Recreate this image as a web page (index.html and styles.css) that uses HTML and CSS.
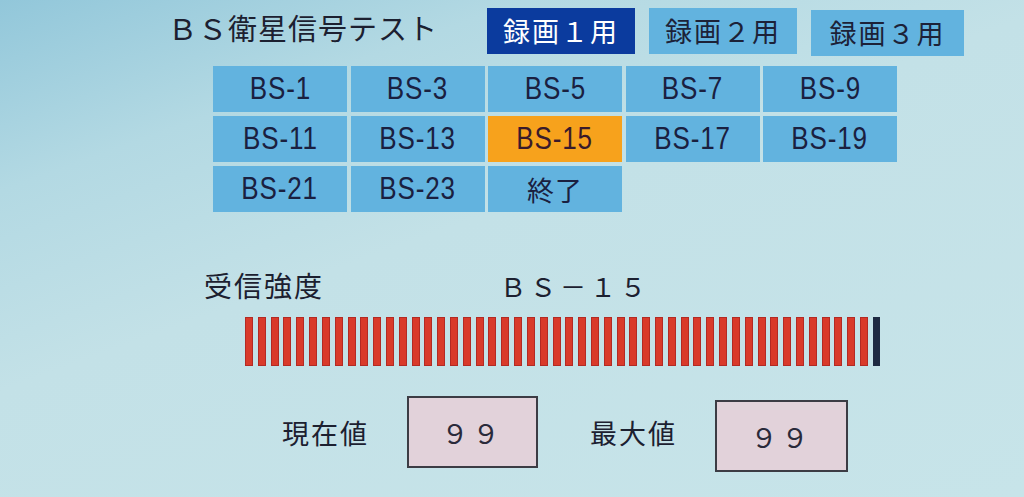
FILE: index.html
```html
<!DOCTYPE html>
<html lang="ja">
<head>
<meta charset="utf-8">
<title>ＢＳ衛星信号テスト</title>
<link rel="stylesheet" href="styles.css">
</head>
<body>
<div class="page">
  <div class="header">
    <div class="title">ＢＳ衛星信号テスト</div>
    <div class="tabs">
      <div class="tab tab-active">録画１用</div>
      <div class="tab">録画２用</div>
      <div class="tab tab-wide">録画３用</div>
    </div>
  </div>

  <div class="grid">
    <div class="cell"><span class="cell-text">BS-1</span></div>
    <div class="cell"><span class="cell-text">BS-3</span></div>
    <div class="cell"><span class="cell-text">BS-5</span></div>
    <div class="cell"><span class="cell-text">BS-7</span></div>
    <div class="cell"><span class="cell-text">BS-9</span></div>
    <div class="cell"><span class="cell-text">BS-11</span></div>
    <div class="cell"><span class="cell-text">BS-13</span></div>
    <div class="cell cell-selected"><span class="cell-text">BS-15</span></div>
    <div class="cell"><span class="cell-text">BS-17</span></div>
    <div class="cell"><span class="cell-text">BS-19</span></div>
    <div class="cell"><span class="cell-text">BS-21</span></div>
    <div class="cell"><span class="cell-text">BS-23</span></div>
    <div class="cell cell-jp">終了</div>
  </div>

  <div class="signal-head">
    <div class="signal-label">受信強度</div>
    <div class="signal-channel">ＢＳ－１５</div>
  </div>

  <div class="bar" id="bar"></div>

  <div class="values">
    <div class="value-label">現在値</div>
    <div class="value-box">９９</div>
    <div class="value-label value-label-2">最大値</div>
    <div class="value-box value-box-2">９９</div>
  </div>
</div>
<script>
  (function () {
    var bar = document.getElementById('bar');
    for (var i = 0; i < 50; i++) {
      var s = document.createElement('div');
      s.className = i === 49 ? 'stripe stripe-end' : 'stripe';
      bar.appendChild(s);
    }
  })();
</script>
</body>
</html>
```

FILE: styles.css
```css
html, body {
  margin: 0;
  padding: 0;
}

body {
  width: 1024px;
  height: 497px;
  overflow: hidden;
  background: linear-gradient(160deg, #92c7da 0%, #b3d9e3 22%, #c3e1e7 45%, #c7e4e9 100%);
  font-family: "Noto Sans CJK JP", "Noto Sans", sans-serif;
  color: #1c2238;
}

.page {
  padding-top: 8px;
}

.header {
  display: flex;
  align-items: center;
  margin-left: 168px;
  height: 47px;
}

.title {
  width: 319px;
  font-size: 29px;
  letter-spacing: 1px;
  line-height: 1;
  color: #1c2030;
  margin-top: -8px;
}

.tabs {
  display: flex;
  gap: 14px;
}

.tab {
  width: 148px;
  height: 46px;
  background: #62b3df;
  display: flex;
  align-items: center;
  justify-content: center;
  font-size: 27px;
  letter-spacing: 2px;
  color: #1c2238;
}

.tab-wide {
  width: 153px;
  margin-top: 2px;
}

.tab-active {
  background: #0b3b9e;
  color: #ffffff;
}

.grid {
  display: grid;
  grid-template-columns: repeat(5, 134px);
  grid-auto-rows: 46px;
  column-gap: 3.5px;
  row-gap: 4px;
  margin-left: 213px;
  margin-top: 11px;
}

.cell {
  background: #62b3df;
  display: flex;
  align-items: center;
  justify-content: center;
  font-family: "Liberation Sans", "DejaVu Sans", sans-serif;
  font-size: 31px;
  color: #1a2040;
}

.cell-text {
  display: inline-block;
  letter-spacing: 1px;
  transform: scaleX(0.84);
}

.cell-jp {
  font-family: "Noto Sans CJK JP", sans-serif;
  font-size: 27px;
  letter-spacing: 1px;
}

.cell-selected {
  background: #f7a21c;
  color: #3a1a2a;
}

.signal-head {
  display: flex;
  align-items: center;
  margin-top: 58px;
  height: 30px;
}

.signal-label {
  margin-left: 204px;
  width: 296px;
  font-size: 28px;
  letter-spacing: 2px;
  color: #1c2030;
}

.signal-channel {
  font-size: 26px;
  letter-spacing: 4px;
  color: #1c2030;
}

.bar {
  display: flex;
  justify-content: space-between;
  width: 635px;
  height: 49px;
  margin-left: 245px;
  margin-top: 17px;
}

.stripe {
  width: 8px;
  height: 100%;
  background: #d93a2a;
  box-shadow: inset 0 0 0 1px #b32a24;
}

.stripe-end {
  width: 7px;
  background: #1e2a42;
  box-shadow: none;
}

.values {
  display: flex;
  align-items: center;
  margin-top: 26px;
}

.value-label {
  margin-left: 282px;
  width: 125px;
  font-size: 27px;
  letter-spacing: 2px;
  color: #1c2030;
}

.value-label-2 {
  margin-left: 52px;
  width: 125px;
}

.value-box {
  width: 127px;
  height: 68px;
  box-sizing: content-box;
  border: 2px solid #3c3c44;
  background: #e2d2da;
  display: flex;
  align-items: center;
  justify-content: center;
  font-size: 27px;
  letter-spacing: 4px;
  color: #2a2a3a;
}

.value-box-2 {
  margin-top: 8px;
  width: 129px;
}
```
